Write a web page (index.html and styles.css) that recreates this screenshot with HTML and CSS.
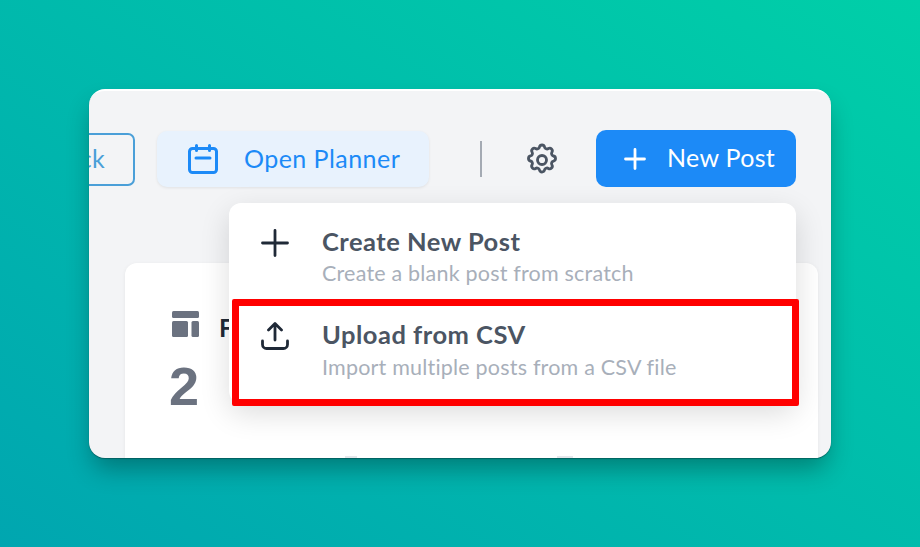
FILE: index.html
```html
<!DOCTYPE html>
<html lang="en">
<head>
    <meta charset="UTF-8">
    <meta name="viewport" content="width=device-width, initial-scale=1.0">
    <title>Posts</title>
    <link rel="stylesheet" href="styles.css">
</head>
<body>
    <div class="window">
        <div class="toolbar">
            <a class="btn btn-back" href="#">Back</a>
            <a class="btn btn-planner" href="#">
                <svg class="icon-planner" viewBox="0 0 30 30" fill="none" stroke="currentColor" stroke-width="3" stroke-linecap="round" stroke-linejoin="round">
                    <rect x="1.500" y="4.500" width="27" height="24" rx="3"/>
                    <path d="M8.500 1.500v5M21.500 1.500v5M8 14h14"/>
                </svg>
                <span>Open Planner</span>
            </a>
            <div class="divider"></div>
            <svg class="icon-gear" viewBox="0 0 24 24" fill="none" stroke="#4b5563" stroke-width="1.9" stroke-linecap="round" stroke-linejoin="round">
                <path d="M10.33 3.32c.43-1.76 2.93-1.76 3.35 0a1.72 1.72 0 0 0 2.57 1.07c1.54-.94 3.31.83 2.37 2.37a1.72 1.72 0 0 0 1.06 2.57c1.76.43 1.76 2.93 0 3.35a1.72 1.72 0 0 0-1.07 2.57c.94 1.54-.83 3.31-2.37 2.37a1.72 1.72 0 0 0-2.57 1.06c-.43 1.76-2.93 1.76-3.35 0a1.72 1.72 0 0 0-2.57-1.07c-1.54.94-3.31-.83-2.37-2.37a1.72 1.72 0 0 0-1.06-2.57c-1.76-.43-1.76-2.93 0-3.35a1.72 1.72 0 0 0 1.07-2.57c-.94-1.54.83-3.31 2.37-2.37 1 .6 2.3.07 2.57-1.06z"/>
                <circle cx="12" cy="12" r="3"/>
            </svg>
            <a class="btn btn-new" href="#">
                <svg class="icon-plus-small" viewBox="0 0 22 22" fill="none" stroke="currentColor" stroke-width="2.8" stroke-linecap="round">
                    <path d="M11 1.500v19M1.500 11h19"/>
                </svg>
                <span>New Post</span>
            </a>
        </div>

        <div class="card">
            <div class="card-head">
                <svg class="icon-layout" viewBox="0 0 27 26" fill="#6b7280">
                    <rect x="0" y="0" width="27" height="7" rx="1.500"/>
                    <rect x="0" y="10" width="16" height="16" rx="1.500"/>
                    <rect x="19.500" y="10" width="7.500" height="16" rx="1.500"/>
                </svg>
                <span class="card-title">Failed</span>
            </div>
            <div class="card-num">2</div>
        </div>

        <!-- dropdown under New Post -->
        <div class="menu">
            <div class="menu-item">
                <svg class="menu-icon" viewBox="0 0 28 28" fill="none" stroke="#1f2937" stroke-width="2.800" stroke-linecap="round">
                    <path d="M14 1.500v25M1.500 14h25"/>
                </svg>
                <div>
                    <div class="menu-title">Create New Post</div>
                    <div class="menu-sub">Create a blank post from scratch</div>
                </div>
            </div>
            <div class="menu-item">
                <svg class="menu-icon" viewBox="0 0 28 28" fill="none" stroke="#1f2937" stroke-width="2.800" stroke-linecap="round" stroke-linejoin="round">
                    <path d="M14 18V2M7.500 8L14 1.500 20.500 8M1.500 19v3.500a4 4 0 0 0 4 4h17a4 4 0 0 0 4-4V19"/>
                </svg>
                <div>
                    <div class="menu-title">Upload from CSV</div>
                    <div class="menu-sub">Import multiple posts from a CSV file</div>
                </div>
            </div>
        </div>
        <div class="highlight"></div>

        <!-- tops of the next row, cut by the window edge -->
        <span class="peek peek-a"></span>
        <span class="peek peek-b"></span>
    </div>
</body>
</html>
```

FILE: styles.css
```css
html, body {
    height: 100%;
}

body {
    margin: 0;
    display: flex;
    align-items: center;
    justify-content: center;
    background: linear-gradient(214deg, #00cfa8 0%, #00a6b0 100%);
    font-family: Lato, "Noto Sans", sans-serif;
}

.window {
    position: relative;
    width: 742px;
    height: 369px;
    background-color: #f3f4f6;
    border-radius: 16px;
    border-top: 2px solid #fff;
    box-sizing: border-box;
    box-shadow: 0 1px 1px rgba(0, 60, 60, 0.5), 0 14px 26px -4px rgba(0, 0, 0, 0.32);
    overflow: hidden;
}

.toolbar {
    display: flex;
    align-items: center;
    justify-content: flex-end;
    height: 57px;
    margin-top: 39px;
    padding-right: 35px;
}

.btn {
    display: flex;
    align-items: center;
    box-sizing: border-box;
    flex-shrink: 0;
    font-size: 25px;
    text-decoration: none;
    letter-spacing: 0.3px;
}

.btn-back {
    align-self: flex-end;
    width: 110px;
    height: 53px;
    margin: 0 22px 1px 0;
    justify-content: flex-end;
    padding: 0 28px 3px 0;
    border: 2px solid #4a9fd8;
    border-radius: 7px;
    color: #4a9fd8;
}

.btn-planner {
    align-self: flex-end;
    width: 272px;
    height: 56px;
    padding: 0 0 2px 31px;
    background-color: #e8f2fd;
    border-radius: 10px;
    box-shadow: 0 1px 3px rgba(0, 0, 0, 0.08);
    color: #1c8af7;
    letter-spacing: 0.45px;
}

.icon-planner {
    width: 30px;
    height: 30px;
    margin: 2px 26px 0 0;
}

.divider {
    flex-shrink: 0;
    width: 2px;
    height: 36px;
    margin: 0 42px 0 51px;
    background-color: #a4aab3;
}

.icon-gear {
    width: 36px;
    height: 36px;
    margin: 3px 36px 0 0;
    flex-shrink: 0;
}

.btn-new {
    width: 200px;
    height: 57px;
    padding: 0 0 3px 28px;
    background-color: #1c8af7;
    border-radius: 10px;
    color: #fff;
}

.icon-plus-small {
    width: 22px;
    height: 22px;
    margin: 3px 21px 0 0;
}

.card {
    box-sizing: border-box;
    width: 693px;
    height: 260px;
    margin: 76px 0 0 36px;
    padding: 48px 0 0 47px;
    background-color: #fff;
    border-radius: 12px;
    box-shadow: 0 1px 4px rgba(0, 0, 0, 0.06);
}

.card-head {
    display: flex;
    align-items: flex-start;
}

.icon-layout {
    width: 27px;
    height: 26px;
    margin-right: 20px;
}

.card-title {
    margin-top: 1px;
    font-size: 25px;
    font-weight: 700;
    line-height: 30px;
    color: #1f2937;
}

.card-num {
    margin: 13px 0 0 -3px;
    font-family: "Liberation Sans", Arial, sans-serif;
    font-size: 54px;
    font-weight: 700;
    line-height: 62px;
    color: #6b7280;
}

.menu {
    position: absolute;
    left: 140px;
    top: 112px;
    width: 567px;
    padding: 8px 0 6px;
    background-color: #fff;
    border-radius: 12px;
    box-shadow: 0 10px 30px rgba(0, 0, 0, 0.14);
}

.menu-item {
    display: flex;
    height: 93px;
    box-sizing: border-box;
    padding-top: 15px;
}

.menu-item + .menu-item .menu-sub {
    margin-top: 4px;
}

.menu-icon {
    width: 28px;
    height: 28px;
    margin: 3px 33px 0 32px;
    flex-shrink: 0;
}

.menu-title {
    font-size: 25.500px;
    font-weight: 700;
    line-height: 30px;
    color: #4b5563;
    letter-spacing: 0.5px;
}

.menu-sub {
    margin-top: 3px;
    font-size: 21.500px;
    line-height: 28px;
    color: #a8afba;
    letter-spacing: 0.2px;
}

.highlight {
    position: absolute;
    left: 143px;
    top: 208px;
    width: 567px;
    height: 107px;
    box-sizing: border-box;
    border: 7px solid #ff0000;
    border-radius: 2px;
}

.peek {
    position: absolute;
    bottom: 0;
    height: 2px;
    background-color: #e5e7eb;
}

.peek-a {
    left: 256px;
    width: 12px;
}

.peek-b {
    left: 468px;
    width: 16px;
}
```
